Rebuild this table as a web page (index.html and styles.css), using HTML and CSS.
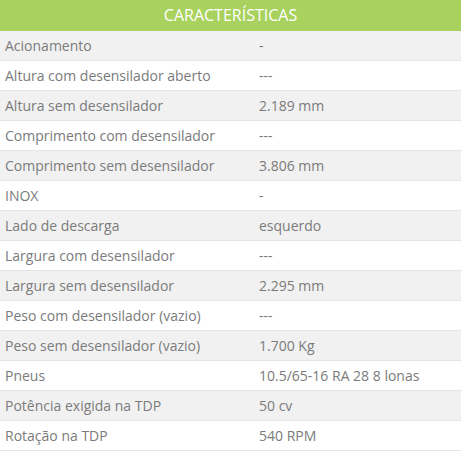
FILE: index.html
```html
<!DOCTYPE html>
<html>
<head>
<meta charset="utf-8">
<link rel="stylesheet" href="styles.css">
</head>
<body>
<div class="specs">
  <div class="specs-head">CARACTERÍSTICAS</div>
  <div class="row odd"><span class="label">Acionamento</span><span class="value">-</span></div>
  <div class="row"><span class="label">Altura com desensilador aberto</span><span class="value">---</span></div>
  <div class="row odd"><span class="label">Altura sem desensilador</span><span class="value">2.189 mm</span></div>
  <div class="row"><span class="label">Comprimento com desensilador</span><span class="value">---</span></div>
  <div class="row odd"><span class="label">Comprimento sem desensilador</span><span class="value">3.806 mm</span></div>
  <div class="row"><span class="label">INOX</span><span class="value">-</span></div>
  <div class="row odd"><span class="label">Lado de descarga</span><span class="value">esquerdo</span></div>
  <div class="row"><span class="label">Largura com desensilador</span><span class="value">---</span></div>
  <div class="row odd"><span class="label">Largura sem desensilador</span><span class="value">2.295 mm</span></div>
  <div class="row"><span class="label">Peso com desensilador (vazio)</span><span class="value">---</span></div>
  <div class="row odd"><span class="label">Peso sem desensilador (vazio)</span><span class="value">1.700 Kg</span></div>
  <div class="row"><span class="label">Pneus</span><span class="value">10.5/65-16 RA 28 8 lonas</span></div>
  <div class="row odd"><span class="label">Potência exigida na TDP</span><span class="value">50 cv</span></div>
  <div class="row"><span class="label">Rotação na TDP</span><span class="value">540 RPM</span></div>
</div>
</body>
</html>
```
FILE: styles.css
```css
html, body {
  margin: 0;
  padding: 0;
  background: #ffffff;
}
body {
  font-family: "Open Sans", "Liberation Sans", sans-serif;
}
.specs {
  width: 461px;
}
.specs-head {
  height: 31px;
  background: #a8d15d;
  color: #ffffff;
  font-size: 16px;
  line-height: 31px;
  text-align: center;
}
.row {
  display: grid;
  grid-template-columns: 254px 1fr;
  height: 29px;
  border-bottom: 1px solid #e4e4e4;
  font-size: 14px;
  line-height: 29px;
  color: #7b7b7b;
  background: #ffffff;
}
.row.odd {
  background: #f1f1f1;
}
.label {
  padding-left: 5px;
}
.value {
  padding-left: 5px;
}
```
